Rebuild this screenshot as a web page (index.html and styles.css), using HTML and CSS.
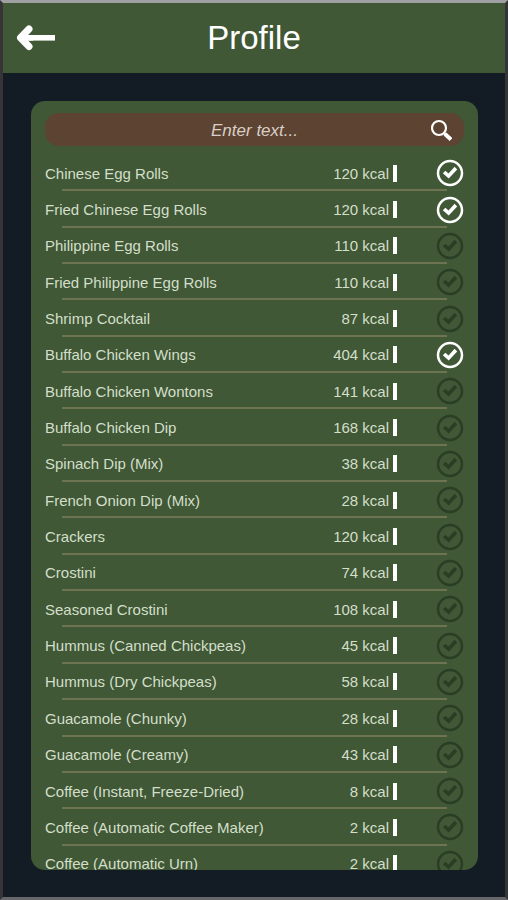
FILE: index.html
```html
<!DOCTYPE html>
<html lang="en">
<head>
    <meta charset="UTF-8">
    <meta name="viewport" content="width=device-width, initial-scale=1.0">
    <title>Profile</title>
    <link rel="stylesheet" href="styles.css">
</head>
<body>

<svg class="symbols" aria-hidden="true">
    <symbol id="check" viewBox="0 0 28 28">
        <circle cx="14" cy="14" r="12" fill="none" stroke="currentColor" stroke-width="2.5" />
        <path d="M6.8 14.3 L9.4 11.8 L12.5 14.4 L18.6 7.8 L21.2 10.4 L12.7 19.6 Z" fill="currentColor" />
    </symbol>
</svg>

<header class="top-bar">
    <button class="back" aria-label="Back">
        <svg viewBox="0 0 40 26" width="40" height="26">
            <path d="M15 12.8 H39" fill="none" stroke="currentColor" stroke-width="5.6" stroke-linecap="square" />
            <path d="M14 4 L5.5 12.8 L14 21.5" fill="none" stroke="currentColor" stroke-width="7" stroke-linecap="round" stroke-linejoin="round" />
            <path d="M7 12.8 H18" fill="none" stroke="currentColor" stroke-width="5.6" />
        </svg>
    </button>
    <h1 class="title">Profile</h1>
</header>

<main class="panel">
    <form class="search">
        <input class="search-input" type="text" placeholder="Enter text..." aria-label="Search food">
        <button class="search-button" aria-label="Search">
            <svg viewBox="0 0 22 22" width="22" height="22">
                <circle cx="9" cy="9" r="7" fill="none" stroke="currentColor" stroke-width="2.2" />
                <path d="M13.5 13.5 L15.5 15.5" stroke="currentColor" stroke-width="2.4" />
                <path d="M15 15 L21 20.5" stroke="currentColor" stroke-width="4" />
            </svg>
        </button>
    </form>
    <ul class="food-list" id="foodList"></ul>
</main>

<script>
    const foods = [
        ["Chinese Egg Rolls", 120, true],
        ["Fried Chinese Egg Rolls", 120, true],
        ["Philippine Egg Rolls", 110, false],
        ["Fried Philippine Egg Rolls", 110, false],
        ["Shrimp Cocktail", 87, false],
        ["Buffalo Chicken Wings", 404, true],
        ["Buffalo Chicken Wontons", 141, false],
        ["Buffalo Chicken Dip", 168, false],
        ["Spinach Dip (Mix)", 38, false],
        ["French Onion Dip (Mix)", 28, false],
        ["Crackers", 120, false],
        ["Crostini", 74, false],
        ["Seasoned Crostini", 108, false],
        ["Hummus (Canned Chickpeas)", 45, false],
        ["Hummus (Dry Chickpeas)", 58, false],
        ["Guacamole (Chunky)", 28, false],
        ["Guacamole (Creamy)", 43, false],
        ["Coffee (Instant, Freeze-Dried)", 8, false],
        ["Coffee (Automatic Coffee Maker)", 2, false],
        ["Coffee (Automatic Urn)", 2, false]
    ];
    const foodList = document.getElementById("foodList");

    foods.forEach(([name, kcal, picked], index) => {
        const row = document.createElement("li");
        row.className = "food";
        row.innerHTML = `
            <label class="food-name" for="food${index}">${name}</label>
            <span class="kcal">${kcal} kcal</span>
            <span class="tick">
                <input type="checkbox" id="food${index}" ${picked ? "checked" : ""}>
                <svg class="tick-icon"><use href="#check" /></svg>
            </span>`;
        foodList.appendChild(row);
    });
</script>
</body>
</html>
```

FILE: styles.css
```css
* {
    box-sizing: border-box;
}

body {
    margin: 0;
    height: 100vh;
    display: flex;
    flex-direction: column;
    background-color: #131c25;
    border: 3px solid #353437;
    border-top-color: #a09fa1;
    border-bottom-color: #67666b;
    font-family: "Liberation Sans", Arial, sans-serif;
    color: #d3dfcb;
}

button {
    display: flex;
    padding: 0;
    border: none;
    background: none;
    color: white;
    cursor: pointer;
}

.symbols {
    display: none;
}

.top-bar {
    flex: none;
    display: grid;
    grid-template-columns: 40px 1fr 40px;
    align-items: center;
    height: 70px;
    padding: 0 12px;
    background-color: #405835;
}

.title {
    margin: 0;
    font-size: 33px;
    font-weight: normal;
    text-align: center;
    color: white;
}

.panel {
    flex: 1;
    min-height: 0;
    display: flex;
    flex-direction: column;
    margin: 28px 27px 27px 28px;
    padding: 12px 14px 0;
    border-radius: 14px;
    background-color: #405835;
    overflow: hidden;
}

.search {
    flex: none;
    display: grid;
    grid-template-columns: 22px 1fr 22px;
    align-items: center;
    height: 33px;
    padding: 0 12px;
    border-radius: 14px;
    background-color: #5d4331;
}

.search-input {
    grid-column: 2;
    width: 100%;
    padding: 2px 0 0;
    border: none;
    outline: none;
    background: none;
    font-family: inherit;
    font-size: 17px;
    font-style: italic;
    text-align: center;
    color: #d9cfc8;
}

.search-input::placeholder {
    color: #d9cfc8;
    opacity: 1;
}

/* the last row runs past the panel and is cut off by it */
.food-list {
    flex: 1;
    display: flex;
    flex-direction: column;
    margin: 9px 0 -12px;
    padding: 0;
    list-style: none;
}

.food {
    flex: 1;
    display: grid;
    grid-template-columns: 1fr auto 67px;
    align-items: center;
    font-size: 15px;
    background: linear-gradient(#6e7451, #6e7451) 17px 100% / calc(100% - 34px) 2px no-repeat;
}

.kcal {
    padding-right: 4px;
    border-right: 4px solid white;
}

.tick {
    position: relative;
    justify-self: end;
    width: 28px;
    height: 28px;
}

.tick input {
    position: absolute;
    inset: 0;
    width: 100%;
    height: 100%;
    margin: 0;
    opacity: 0;
    cursor: pointer;
}

.tick-icon {
    display: block;
    width: 28px;
    height: 28px;
    color: #2b3d24;
}

.tick input:checked + .tick-icon {
    color: white;
}
```
